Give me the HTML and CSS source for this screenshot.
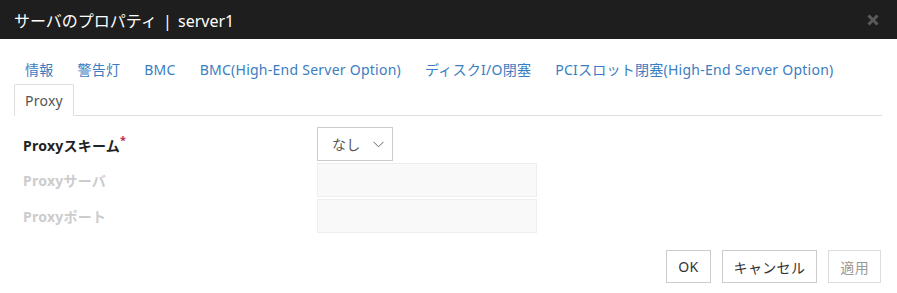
FILE: index.html
```html
<!DOCTYPE html>
<html lang="ja">
<head>
    <meta charset="UTF-8">
    <title>サーバのプロパティ | server1</title>
    <link rel="stylesheet" href="styles.css">
</head>
<body>

    <div class="dialog">
        <div class="dialog-header">
            <span class="dialog-title">サーバのプロパティ <span class="sep">|</span> server1</span>
            <span class="close-btn">
                <svg width="12" height="12" viewBox="0 0 12 12">
                    <path d="M1.5 1.5 L10.5 10.5 M10.5 1.5 L1.5 10.5" stroke="#5a5a5a" stroke-width="3" stroke-linecap="butt"/>
                </svg>
            </span>
        </div>

        <div class="dialog-body">
            <ul class="nav-tabs">
                <li><a>情報</a></li>
                <li><a>警告灯</a></li>
                <li><a>BMC</a></li>
                <li><a>BMC(High-End Server Option)</a></li>
                <li><a>ディスクI/O閉塞</a></li>
                <li><a>PCIスロット閉塞(High-End Server Option)</a></li>
                <li class="active"><a>Proxy</a></li>
            </ul>

            <div class="form">
                <div class="form-row">
                    <label class="required">Proxyスキーム<sup>*</sup></label>
                    <div class="select">
                        <span>なし</span>
                        <svg width="11" height="7" viewBox="0 0 11 7">
                            <path d="M0.5 0.8 L5.5 5.8 L10.5 0.8" fill="none" stroke="#666" stroke-width="1"/>
                        </svg>
                    </div>
                </div>
                <div class="form-row">
                    <label class="disabled">Proxyサーバ</label>
                    <div class="input disabled"></div>
                </div>
                <div class="form-row">
                    <label class="disabled">Proxyポート</label>
                    <div class="input disabled"></div>
                </div>
            </div>

            <div class="buttons">
                <button class="btn">OK</button>
                <button class="btn">キャンセル</button>
                <button class="btn" disabled>適用</button>
            </div>
        </div>
    </div>

</body>
</html>
```

FILE: styles.css
```css
body {
    margin: 0;
    font-family: "Noto Sans", "Noto Sans CJK JP", sans-serif;
    font-size: 14px;
    letter-spacing: 0.25px;
    background-color: #fff;
    color: #333;
}

.dialog-header {
    height: 39px;
    background-color: #1e1e1e;
    display: flex;
    align-items: center;
    justify-content: space-between;
    padding: 0 18px 0 14px;
}

.dialog-title {
    color: #fff;
    font-size: 16px;
    letter-spacing: 0;
}

.dialog-title .sep {
    margin: 0 2px;
}

.close-btn {
    display: flex;
    margin-top: 1px;
}

.dialog-body {
    padding: 14px 15px 0 14px;
}

.nav-tabs {
    list-style: none;
    margin: 0;
    padding: 0;
    display: flex;
    flex-wrap: wrap;
    border-bottom: 1px solid #ddd;
}

.nav-tabs li {
    margin-right: 2px;
    margin-bottom: -1px;
}

.nav-tabs a {
    display: block;
    height: 30px;
    line-height: 31px;
    padding: 0 10px;
    border: 1px solid transparent;
    border-radius: 2px 2px 0 0;
    color: #3a7dc1;
}

.nav-tabs li.active a {
    color: #555;
    border-color: #ddd;
    border-bottom-color: #fff;
    background-color: #fff;
}

.form {
    padding: 11px 0 0 9px;
    display: flex;
    flex-direction: column;
    gap: 2px;
}

.form-row {
    display: grid;
    grid-template-columns: 294px 220px;
    align-items: center;
    height: 34px;
}

.form-row label {
    font-weight: bold;
    color: #222;
}

.form-row label sup {
    color: #c7254e;
    font-size: 11px;
    position: relative;
    top: -1px;
}

.form-row label.disabled {
    color: #ccc;
}

.select {
    width: 76px;
    height: 34px;
    border: 1px solid #ccc;
    display: flex;
    align-items: center;
    justify-content: space-between;
    padding: 0 8px 0 14px;
    box-sizing: border-box;
    color: #555;
}

.input {
    height: 34px;
    box-sizing: border-box;
    border: 1px solid #eee;
    background-color: #f9f9f9;
}

.buttons {
    display: flex;
    justify-content: flex-end;
    gap: 11px;
    padding: 17px 1px 0 0;
}

.btn {
    height: 33px;
    padding: 0 11px;
    font-family: inherit;
    font-size: 14px;
    letter-spacing: 0.35px;
    color: #333;
    background-color: #fff;
    border: 1px solid #ccc;
    border-radius: 0;
}

.btn:disabled {
    color: #999;
    border-color: #ddd;
}
```
